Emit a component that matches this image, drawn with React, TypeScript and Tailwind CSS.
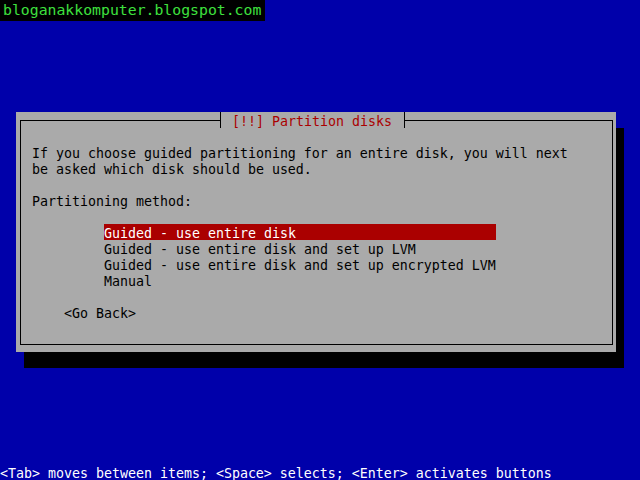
import React from 'react';

const App = () => {
  const options = [
    'Guided - use entire disk',
    'Guided - use entire disk and set up LVM',
    'Guided - use entire disk and set up encrypted LVM',
    'Manual',
  ];

  return (
    <div className="relative w-[640px] h-[480px] bg-[#0000aa] flex flex-col overflow-hidden font-['DejaVu_Sans_Mono','Liberation_Mono',monospace] text-[13.29px] leading-[19px] text-black">
      {/* Watermark */}
      <div className="absolute top-0 left-0 w-[265px] h-[21px] bg-black pl-[3px] text-[14.8px] leading-[20px] text-[#3ee03e] whitespace-pre">
        bloganakkomputer.blogspot.com
      </div>

      {/* Dialog */}
      <div className="mt-[112px] ml-4 w-[600px] h-[240px] bg-[#aaaaaa] shadow-[8px_16px_0_#000] pt-2 pl-1 pr-[3px] pb-[7px] flex">
        <div className="flex-1 border border-black flex flex-col">
          {/* Title */}
          <div className="-mt-[9px] h-4 flex">
            <span className="ml-[199px] h-4 pl-[11px] pr-[12px] border-x border-black bg-[#aaaaaa] text-[#aa0000] whitespace-pre">
              [!!] Partition disks
            </span>
          </div>

          <div className="mt-4 pl-[11px] flex flex-col whitespace-pre">
            <div className="h-4">If you choose guided partitioning for an entire disk, you will next</div>
            <div className="h-4">be asked which disk should be used.</div>
            <div className="h-4 mt-4">Partitioning method:</div>

            <div className="mt-4 ml-[72px] flex flex-col">
              {options.map((opt, i) => (
                <div
                  key={i}
                  className={
                    i === 0
                      ? 'h-4 w-[392px] bg-[#aa0000] text-white'
                      : 'h-4 w-[392px]'
                  }
                >
                  {opt}
                </div>
              ))}
            </div>

            <div className="h-4 mt-4 ml-8">&lt;Go Back&gt;</div>
          </div>
        </div>
      </div>

      {/* Help line */}
      <div className="mt-auto h-4 text-white whitespace-pre">
        &lt;Tab&gt; moves between items; &lt;Space&gt; selects; &lt;Enter&gt; activates buttons
      </div>
    </div>
  );
};

export default App;
